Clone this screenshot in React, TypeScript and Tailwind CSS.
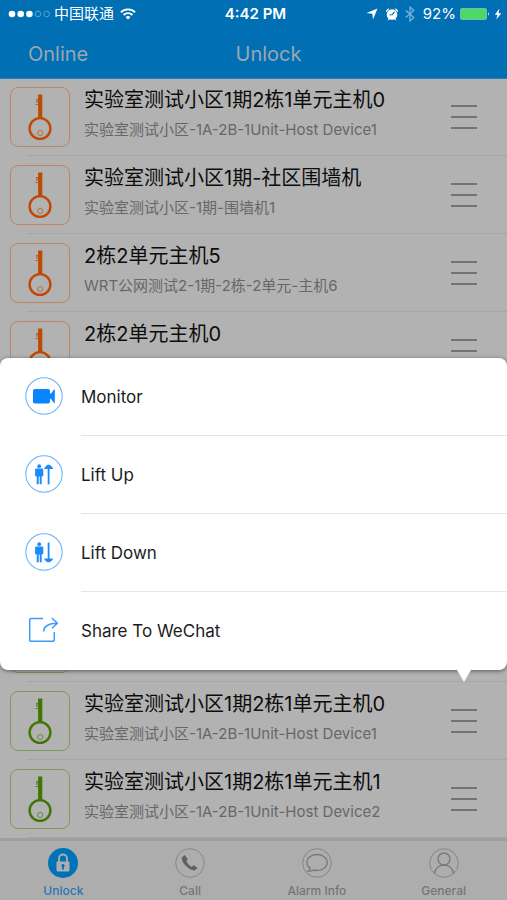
import { ReactNode } from 'react';
import clsx from 'clsx';

type Device = { title?: string; path?: string };

const ONLINE_DEVICES: Device[] = [
  { title: '实验室测试小区1期2栋1单元主机0', path: '实验室测试小区-1A-2B-1Unit-Host Device1' },
  { title: '实验室测试小区1期-社区围墙机', path: '实验室测试小区-1期-围墙机1' },
  { title: '2栋2单元主机5', path: 'WRT公网测试2-1期-2栋-2单元-主机6' },
  { title: '2栋2单元主机0' },
];

const GUEST_DEVICES: Device[] = [
  {},
  { title: '实验室测试小区1期2栋1单元主机0', path: '实验室测试小区-1A-2B-1Unit-Host Device1' },
  { title: '实验室测试小区1期2栋1单元主机1', path: '实验室测试小区-1A-2B-1Unit-Host Device2' },
];

function KeyIcon() {
  return (
    <svg viewBox="0 0 58 58" className="size-[58px]" fill="none" stroke="currentColor">
      <path d="M29.2 6.5V30.5" strokeWidth="4.2" />
      <path d="M25 11.5h3M26 11v4M24.500 16.500h4" strokeWidth="1.2" opacity="0.8" />
      <circle cx="29" cy="40.5" r="10.4" strokeWidth="2.4" />
      <circle cx="29.2" cy="45" r="2.6" strokeWidth="0.8" opacity="0.8" />
    </svg>
  );
}

function MenuIcon() {
  return (
    <svg viewBox="0 0 26 26" className="size-[26px]" stroke="currentColor" strokeWidth="2">
      <path d="M0 2h26M0 13h26M0 24h26" />
    </svg>
  );
}

function VideoIcon() {
  return (
    <svg viewBox="0 0 38 38" className="size-[38px]" fill="#0a84ff">
      <circle cx="19" cy="19" r="18.2" fill="none" stroke="#6db3fb" strokeWidth="1.1" />
      <rect x="8" y="12" width="17" height="14.5" rx="1.8" />
      <path d="M24 17.5l2.500-1.500 2.500-3.500h.8v13.500h-.8l-2.500-3.500-2.500-1.500z" />
    </svg>
  );
}

function LiftIcon({ down = false }: { down?: boolean }) {
  return (
    <svg viewBox="0 0 38 38" className="size-[38px]" fill="#1b8cfd">
      <circle cx="19" cy="19" r="18.2" fill="none" stroke="#6db3fb" strokeWidth="1.1" />
      <circle cx="14.2" cy="11.2" r="1.9" />
      <path d="M11.3 13.400h5.800q1.200 0 1.200 1.200v6.600h-1.600v8h-2v-7.700h-1v7.700h-2v-8h-1.600v-6.600q0-1.200 1.200-1.200z" />
      {down ? (
        <path d="M22.700 9.500h1.800v16h3.600l-.6 1.500-2.600 2.200h-2.600l-2.600-2.200-.6-1.500h3.600z" />
      ) : (
        <path d="M22.700 29.200h1.800V14h3.600l-.6-1.500-2.600-2.700h-2.600l-2.600 2.700-.6 1.500h3.600z" />
      )}
    </svg>
  );
}

function ShareIcon() {
  return (
    <svg viewBox="0 0 38 38" className="size-[38px]" fill="none" stroke="#3d9bf9" strokeWidth="1.5">
      <path d="M18 7.500H6A1.300 1.300 0 0 0 4.700 8.800V29A1.300 1.300 0 0 0 6 30.300H28A1.300 1.300 0 0 0 29.300 29V21" />
      <path d="M18.500 20.500C19 15.500 23.500 12.300 32.300 12.300M26.800 7l5.500 5.300-5.300 5" />
    </svg>
  );
}

const ACTIONS: { label: string; icon: ReactNode }[] = [
  { label: 'Monitor', icon: <VideoIcon /> },
  { label: 'Lift Up', icon: <LiftIcon /> },
  { label: 'Lift Down', icon: <LiftIcon down /> },
  { label: 'Share To WeChat', icon: <ShareIcon /> },
];

function ActionMenu() {
  return (
    <div className="absolute inset-x-0 bottom-full z-10 mb-3 rounded-lg bg-white shadow-[0_1px_4px_rgba(0,0,0,0.5)]">
      <ul>
        {ACTIONS.map((a, i) => (
          <li key={a.label}>
            <button className="flex h-[78px] w-full items-center text-left">
              <span className="ml-[25px] mr-[18px] w-[38px] shrink-0 pb-[2px]">{a.icon}</span>
              <span className={clsx('flex h-full flex-1 items-center pt-[2px] text-[17px] text-[#1c1c1c]', i < ACTIONS.length - 1 && 'border-b border-[#e6e6e6]')}>{a.label}</span>
            </button>
          </li>
        ))}
      </ul>
      <svg viewBox="0 0 14 12" className="absolute right-9 top-full h-3 w-[14px]" fill="#fff"><path d="M0 0h14L7 12z" /></svg>
    </div>
  );
}

function DeviceRow({ device, tone, children }: { device: Device; tone: 'orange' | 'green'; children?: ReactNode }) {
  return (
    <li className="relative flex h-[78px]">
      <div className={clsx('ml-[10px] mt-[9px] size-[60px] shrink-0 rounded-lg border', tone === 'orange' ? 'border-[#bf8562] text-[#bd4a04]' : 'border-[#7d9858] text-[#417505]')}>
        <KeyIcon />
      </div>
      <div className="ml-[14px] min-w-0 flex-1 pt-2">
        {device.title && <h2 className="truncate text-[20px] leading-[28px] text-[#0c0c0c]">{device.title}</h2>}
        {device.path && <p className="mt-1 truncate text-[15px] leading-6 text-[#676767]">{device.path}</p>}
      </div>
      <button aria-label="Actions" className="mr-[30px] shrink-0 text-[#737373]"><MenuIcon /></button>
      <span className="absolute bottom-0 left-[27px] right-0 h-px bg-[#a6a6a6]" />
      {children}
    </li>
  );
}

function StatusBar() {
  return (
    <div className="grid h-7 grid-cols-[1fr_auto_1fr] items-center text-[15px] text-white">
      <div className="flex items-center pl-2">
        <svg viewBox="0 0 42 8" className="h-2 w-[42px]" fill="currentColor">
          <circle cx="4" cy="4" r="3.3" />
          <circle cx="12.7" cy="4" r="3.3" />
          <circle cx="21.4" cy="4" r="3.3" />
          <circle cx="30" cy="4" r="2.8" fill="none" stroke="#6fb0dc" strokeWidth="0.8" />
          <circle cx="38.600" cy="4" r="2.8" fill="none" stroke="#6fb0dc" strokeWidth="0.8" />
        </svg>
        <span className="ml-1">中国联通</span>
        <svg viewBox="0 0 16 12" className="ml-[6px] h-3 w-4" fill="none" stroke="currentColor" strokeWidth="1.9">
          <path d="M.9 4.300a10 10 0 0 1 14.200 0M3.500 7a6.400 6.400 0 0 1 9 0" />
          <path d="M8 11.600L5.600 9.200a3.400 3.400 0 0 1 4.800 0z" fill="currentColor" stroke="none" />
        </svg>
      </div>
      <span className="pl-1 font-semibold">4:42 PM</span>
      <div className="flex items-center justify-end pr-[5px]">
        <svg viewBox="0 0 12 12" className="size-3" fill="currentColor"><path d="M11.500.5L7 11.500 6.300 5.700.5 5z" /></svg>
        <svg viewBox="0 0 14 14" className="ml-[7px] size-[14px]" fill="currentColor">
          <circle cx="7" cy="7.500" r="5.300" />
          <path d="M1 4.500a3 3 0 0 1 3.500-3L1.700 5zM13 4.500a3 3 0 0 0-3.500-3L12.300 5zM2.500 13.500l1.500-2.500 1.500 1zM11.500 13.500L10 11l-1.500 1z" />
          <path d="M4.500 7.700h2.700l2.300-2.900" fill="none" stroke="#006fb4" strokeWidth="1.1" />
        </svg>
        <svg viewBox="0 0 10 16" className="ml-[6px] h-4 w-[10px]" fill="none" stroke="#7cb4dc" strokeWidth="1.2"><path d="M.8 4.500l8 7L5 15V1l3.800 3.500-8 7" /></svg>
        <span className="ml-2">92%</span>
        <svg viewBox="0 0 30 12" className="ml-1 h-3 w-[30px]">
          <rect x=".5" y=".5" width="26" height="11" rx="1.500" fill="#4cd964" stroke="#7fc4c0" strokeWidth="0.8" />
          <path d="M28 4q1.800 2 0 4z" fill="#fff" />
        </svg>
        <svg viewBox="0 0 8 12" className="ml-1 h-3 w-2" fill="currentColor"><path d="M5.500.5L.8 6.700h2.700L2.300 11.500 7.300 5.200H4.500z" /></svg>
      </div>
    </div>
  );
}

const TABS: { label: string; icon: ReactNode; active?: boolean }[] = [
  {
    label: 'Unlock',
    active: true,
    icon: (
      <>
        <circle cx="15" cy="15" r="15" fill="#0072b8" />
        <rect x="8.500" y="13.500" width="13" height="10" rx="1" fill="#adadad" />
        <path d="M11 14v-3.500a4 4 0 0 1 8 0V14" fill="none" stroke="#adadad" strokeWidth="1.8" />
        <path d="M15 16a1.700 1.700 0 0 1 .9 3.100V21.500h-1.800V19.100A1.700 1.700 0 0 1 15 16z" fill="#0072b8" />
      </>
    ),
  },
  {
    label: 'Call',
    icon: (
      <>
        <circle cx="15" cy="15" r="14.3" fill="none" stroke="#888" strokeWidth="1" />
        <path d="M9 7.500L7 9.500c-.8 1.500 1 5.500 4 8.600s7 5 8.800 4.200l2.300-1.700c.4-.4.300-.9-.1-1.200l-2.600-1.900c-.4-.3-.9-.2-1.200.1l-1.200 1.300c-1.200-.4-2.700-1.600-3.700-2.700s-1.600-2.100-1.900-3.100l1.100-1c.3-.4.300-.8.100-1.200L10.200 7.700c-.3-.4-.8-.5-1.200-.2z" fill="#606060" />
      </>
    ),
  },
  {
    label: 'Alarm Info',
    icon: (
      <>
        <circle cx="15" cy="15" r="14.3" fill="none" stroke="#868686" strokeWidth="1" />
        <path d="M8.200 20.300C6 18.800 4.800 16.800 4.800 14.500c0-4.400 4.600-8 10.200-8s10.200 3.600 10.200 8-4.600 8-10.200 8c-1.200 0-2.400-.2-3.500-.5-1.500 1-3.300 1.300-5.300 1.100 1.200-.6 1.900-1.500 2-2.800z" fill="none" stroke="#7a7a7a" strokeWidth="1.3" />
      </>
    ),
  },
  {
    label: 'General',
    icon: (
      <>
        <circle cx="15" cy="15" r="14.3" fill="none" stroke="#868686" strokeWidth="1" />
        <circle cx="15" cy="11" r="6" fill="none" stroke="#7a7a7a" strokeWidth="1.3" />
        <path d="M5.500 25.300c.8-4.800 4.300-8.300 9.500-8.300s8.700 3.500 9.500 8.300" fill="none" stroke="#7a7a7a" strokeWidth="1.3" />
      </>
    ),
  },
];

export default function App() {
  return (
    <div className="flex min-h-screen flex-col bg-[#b2b2b2] font-['Inter','Noto_Sans_CJK_SC',sans-serif]">
      <header className="relative z-10 bg-[#006fb4] shadow-[0_1px_0_#2f7fb2]">
        <StatusBar />
        <div className="grid h-[50px] grid-cols-3 items-center pt-[2px] text-[20px] text-[#9ba7b0]">
          <button className="justify-self-start pl-7">Online</button>
          <h1 className="justify-self-center pl-[30px]">Unlock</h1>
        </div>
      </header>

      <main className="flex flex-1 flex-col justify-between">
        <ul>
          {ONLINE_DEVICES.map((d, i) => <DeviceRow key={i} device={d} tone="orange" />)}
        </ul>
        <ul>
          {GUEST_DEVICES.map((d, i) => (
            <DeviceRow key={i} device={d} tone="green">{i === 1 && <ActionMenu />}</DeviceRow>
          ))}
        </ul>
      </main>

      <nav className="grid h-[62px] grid-cols-4 border-t-[3px] border-[#9f9fa1] bg-[#adadad]">
        {TABS.map(t => (
          <a key={t.label} href="#" className={clsx('flex flex-col items-center pt-[7px] text-[12px] leading-4 font-medium', t.active ? 'text-[#2b74b8]' : 'text-[#757575]')}>
            <svg viewBox="0 0 30 30" className="size-[30px] shrink-0">{t.icon}</svg>
            <span className="mt-[5px]">{t.label}</span>
          </a>
        ))}
      </nav>
    </div>
  );
}
